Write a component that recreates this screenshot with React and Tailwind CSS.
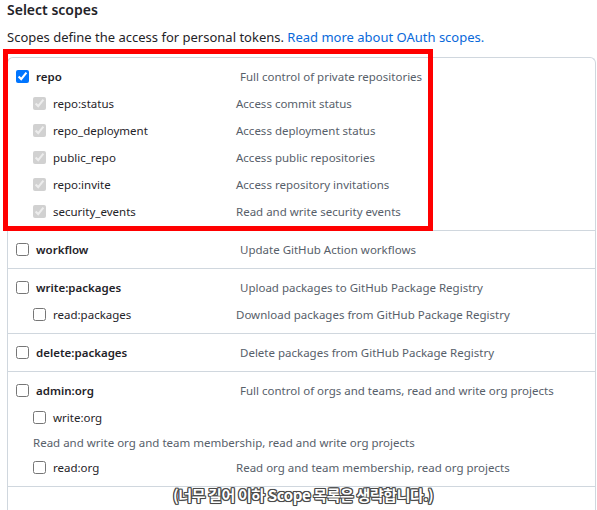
import { useState } from 'react'

const groups = [
  {
    name: 'repo',
    desc: 'Full control of private repositories',
    checked: true,
    children: [
      { name: 'repo:status', desc: 'Access commit status' },
      { name: 'repo_deployment', desc: 'Access deployment status' },
      { name: 'public_repo', desc: 'Access public repositories' },
      { name: 'repo:invite', desc: 'Access repository invitations' },
      { name: 'security_events', desc: 'Read and write security events' },
    ],
  },
  { name: 'workflow', desc: 'Update GitHub Action workflows', children: [] },
  {
    name: 'write:packages',
    desc: 'Upload packages to GitHub Package Registry',
    children: [{ name: 'read:packages', desc: 'Download packages from GitHub Package Registry' }],
  },
  { name: 'delete:packages', desc: 'Delete packages from GitHub Package Registry', children: [] },
  {
    name: 'admin:org',
    desc: 'Full control of orgs and teams, read and write org projects',
    children: [
      { name: 'write:org', desc: '', note: 'Read and write org and team membership, read and write org projects' },
      { name: 'read:org', desc: 'Read org and team membership, read org projects' },
    ],
  },
]

function Box({ checked, disabled }) {
  return (
    <input
      type="checkbox"
      defaultChecked={checked}
      disabled={disabled}
      className="m-0 h-[13px] w-[13px] shrink-0"
    />
  )
}

function Group({ g }) {
  return (
    <div className="border-t border-[#d0d7de] py-[5px] first:border-t-0">
      <div className="flex h-[27px] items-center">
        <div className="flex w-[232px] shrink-0 items-center gap-[7px] pl-2">
          <Box checked={g.checked} />
          <span className="font-semibold text-[#1f2328]">{g.name}</span>
        </div>
        <span className="text-[#57606a]">{g.desc}</span>
      </div>
      {g.children.map((c) => (
        <div key={c.name}>
          <div className="flex h-[27px] items-center">
            <div className="flex w-[228px] shrink-0 items-center gap-[7px] pl-[25px]">
              <Box checked={g.checked} disabled={g.checked} />
              <span className="text-[#1f2328]">{c.name}</span>
            </div>
            <span className="text-[#57606a]">{c.desc}</span>
          </div>
          {c.note && (
            <div className="flex h-[23px] items-center pl-[25px] text-[#57606a]">{c.note}</div>
          )}
        </div>
      ))}
    </div>
  )
}

export default function App() {
  const [list] = useState(groups)
  return (
    <div className="relative h-[510px] w-[597px] overflow-hidden bg-white font-['Noto_Sans',sans-serif] text-[11.5px]">
      <div className="px-[7px]">
        <h3 className="h-[21px] pt-px text-[14px] font-semibold leading-[18px] text-[#1f2328]">Select scopes</h3>
        <p className="mt-[6px] text-[13px] leading-[20px] text-[#1f2328]">
          Scopes define the access for personal tokens.{' '}
          <a className="text-[#0969da]">Read more about OAuth scopes.</a>
        </p>
        <div className="mt-[10px] h-[460px] w-[589px] rounded-t-md border border-b-0 border-[#d0d7de]">
          {list.map((g) => (
            <Group key={g.name} g={g} />
          ))}
          <div className="border-t border-[#d0d7de]" />
        </div>
      </div>

      {/* highlight drawn over the repo group */}
      <div className="pointer-events-none absolute left-[3px] top-[49px] h-[182px] w-[430px] border-[5px] border-[#ff0000]" />

      {/* caption */}
      <div className="absolute left-[173px] top-[484px] font-['Noto_Sans_CJK_KR',sans-serif] text-[15px] font-bold tracking-[-0.4px] text-white [text-shadow:-1px_-1px_0_#4a4a4a,1px_-1px_0_#4a4a4a,-1px_1px_0_#4a4a4a,1px_1px_0_#4a4a4a,0_1px_0_#4a4a4a,0_-1px_0_#4a4a4a,1px_0_0_#4a4a4a,-1px_0_0_#4a4a4a,0_0_2px_#4a4a4a]">
        (너무 길어 이하 Scope 목록은 생략합니다.)
      </div>
    </div>
  )
}
